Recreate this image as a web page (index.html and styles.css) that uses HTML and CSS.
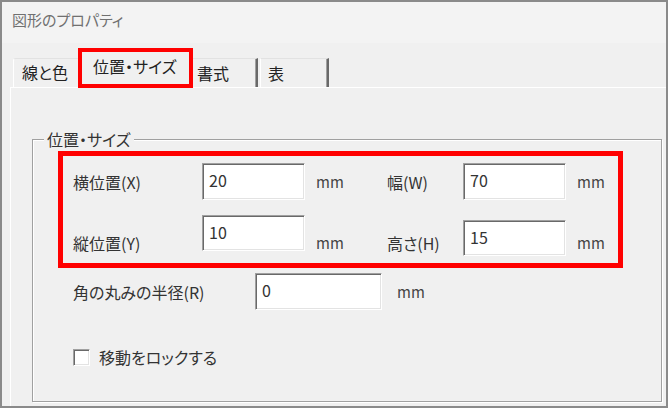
FILE: index.html
```html
<!DOCTYPE html>
<html lang="ja">
<head>
    <meta charset="UTF-8">
    <meta name="viewport" content="width=device-width, initial-scale=1.0">
    <title>図形のプロパティ</title>
    <link rel="stylesheet" href="styles.css">
</head>
<body>

    <div class="dialog">
        <header class="titlebar">図形のプロパティ</header>

        <!-- Pestañas -->
        <div class="tabs">
            <div class="tab tab-first">線と色</div>
            <div class="tab tab-active">位置・サイズ</div>
            <div class="tab tab-after">書式</div>
            <div class="tab tab-last">表</div>
        </div>

        <main class="panel">
            <fieldset class="group">
                <legend>位置・サイズ</legend>

                <!-- Posición y tamaño (marcado en rojo) -->
                <div class="mark">
                    <div class="fields">
                        <span class="lbl">横位置(X)</span>
                        <input class="box" type="text" value="20">
                        <span class="unit">mm</span>
                        <span class="lbl">幅(W)</span>
                        <input class="box" type="text" value="70">
                        <span class="unit">mm</span>

                        <span class="lbl low">縦位置(Y)</span>
                        <input class="box top" type="text" value="10">
                        <span class="unit low">mm</span>
                        <span class="lbl low">高さ(H)</span>
                        <input class="box bottom" type="text" value="15">
                        <span class="unit low">mm</span>
                    </div>
                </div>

                <div class="radius">
                    <span class="lbl radius-lbl">角の丸みの半径(R)</span>
                    <input class="box wide" type="text" value="0">
                    <span class="unit">mm</span>
                </div>

                <label class="lock">
                    <span class="check"></span>
                    移動をロックする
                </label>
            </fieldset>
        </main>
    </div>

</body>
</html>
```

FILE: styles.css
```css
body {
    margin: 0;
    padding: 0;
    background-color: #fff;
    font-family: "Noto Sans CJK JP", "Noto Sans", sans-serif;
    font-feature-settings: "palt";
    color: #333;
}

.dialog {
    width: 668px;
    height: 408px;
    box-sizing: border-box;
    border: 2px solid #8a8a8a;
    background-color: #f0f0f0;
    display: flex;
    flex-direction: column;
    overflow: hidden;
}

.titlebar {
    height: 41px;
    box-sizing: border-box;
    padding: 7px 0 0 10px;
    background-color: #f3f3f3;
    color: #707070;
    font-size: 15px;
    line-height: 22px;
}

/* Pestañas */
.tabs {
    height: 44px;
    display: flex;
    align-items: flex-end;
    padding-left: 11px;
    font-size: 16px;
    color: #222;
}

.tab {
    height: 29px;
    box-sizing: border-box;
    line-height: 26px;
    background-color: #f0f0f0;
    border-top: 1px solid #e2e2e2;
    border-left: 1px solid #fff;
    border-right: 1px solid #696969;
    box-shadow: inset -1px 0 0 #a0a0a0;
}

.tab-first {
    width: 65px;
    padding-left: 8px;
    border-top-left-radius: 3px;
    border-right: none;
    box-shadow: none;
}

.tab-active {
    width: 115px;
    height: 40px;
    margin-bottom: -1px;
    padding: 0 0 0 11px;
    border: 4px solid #f00;
    line-height: 28px;
    background-color: #f0f0f0;
    box-shadow: none;
    position: relative;
    z-index: 1;
}

.tab-after {
    width: 65px;
    padding-left: 4px;
    border-left: none;
    line-height: 29px;
    border-right-width: 2px;
}

.tab-last {
    width: 69px;
    margin-left: 2px;
    padding-left: 7px;
    line-height: 29px;
    border-right-width: 2px;
}

.panel {
    flex: 1;
    margin-left: 8px;
    border-top: 1px solid #fff;
    border-left: 1px solid #fff;
    padding: 40px 4px 4px 21px;
    display: flex;
}

/* Marco agrupado */
.group {
    flex: 1;
    margin: 0;
    padding: 0 0 0 25px;
    border: 1px solid #a0a0a0;
    box-shadow: 1px 1px 0 #fff, inset 1px 1px 0 #fff;
    font-size: 16px;
}

.group legend {
    margin-left: -14px;
    padding: 0 3px;
    background-color: #f0f0f0;
    line-height: 22px;
    color: #333;
}

.mark {
    width: 565px;
    height: 117px;
    box-sizing: border-box;
    margin-top: 1px;
    border: 5px solid #f00;
    padding: 7px 0 0 10px;
}

.fields {
    display: grid;
    grid-template-columns: 129px 103px 82px 76px 103px auto;
    grid-template-rows: 37px 41px;
    row-gap: 15px;
    align-items: center;
}

.lbl,
.unit {
    line-height: 20px;
    white-space: nowrap;
}

.unit {
    padding-left: 11px;
    font-size: 15px;
    color: #444;
}

.low {
    align-self: end;
    padding-bottom: 3px;
}

.box {
    width: 103px;
    height: 37px;
    box-sizing: border-box;
    margin: 0;
    padding: 0 0 3px 6px;
    border: 1px solid;
    border-color: #a0a0a0 #fff #fff #a0a0a0;
    box-shadow: inset 1px 1px 0 #696969, inset -1px -1px 0 #e3e3e3;
    background-color: #fff;
    font-family: inherit;
    font-size: 16px;
    color: #333;
    outline: none;
}

.box.top {
    height: 36px;
    align-self: start;
}

.box.bottom {
    height: 36px;
    align-self: end;
}

.radius {
    display: flex;
    align-items: center;
    margin: 5px 0 0 15px;
}

.radius-lbl {
    width: 182px;
}

.box.wide {
    width: 127px;
}

.radius .unit {
    padding-left: 15px;
}

.lock {
    display: flex;
    align-items: center;
    gap: 9px;
    margin: 37px 0 0 15px;
    line-height: 20px;
}

.check {
    width: 17px;
    height: 17px;
    box-sizing: border-box;
    border: 1px solid;
    border-color: #a0a0a0 #fff #fff #a0a0a0;
    box-shadow: inset 1px 1px 0 #696969, inset -1px -1px 0 #e3e3e3;
    background-color: #fff;
}
```
